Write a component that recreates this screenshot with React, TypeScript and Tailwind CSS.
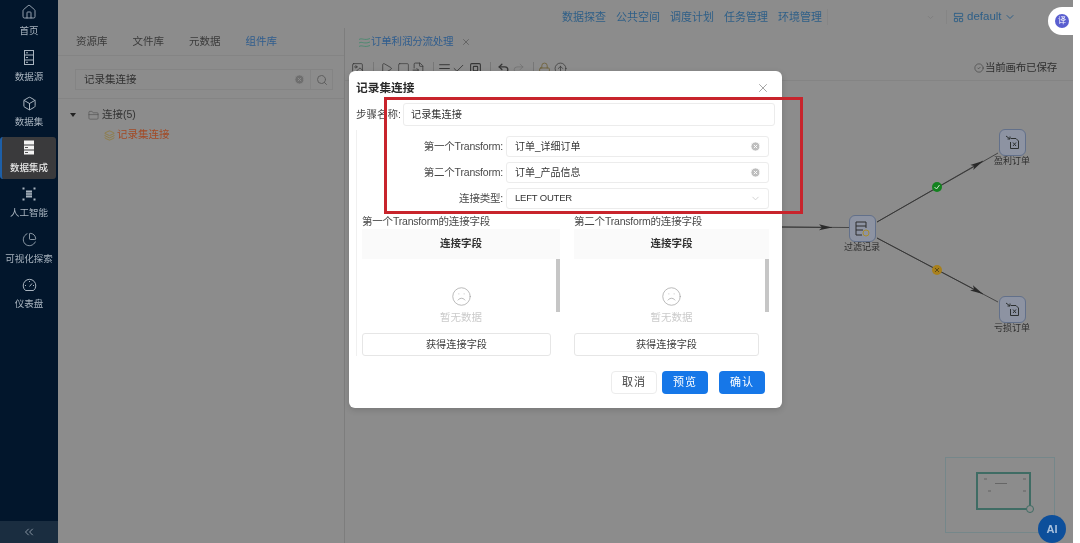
import { Box, ChevronDown, ChevronsLeft, CircleArrowUp, CircleCheck, FileInput, FolderClosed, Frown, Home, Image, LayoutPanelTop, Lock, PieChart, Play, Redo2, Search, Square, SquareSquare, Undo2, X, XCircle, Layers, Check, AlignJustify } from "lucide-react";
import type { ReactNode } from "react";

const FONT = "font-['Liberation_Sans','Noto_Sans_CJK_SC',sans-serif]";

function SourceIcon() {
  return (
    <svg width="12" height="15" viewBox="0 0 12 15" fill="none" stroke="currentColor" strokeWidth="1">
      <rect x="1.500" y="0.500" width="9" height="14" />
      <path d="M1.500 5h9M1.500 10h9M3 2.800h2M3 7.500h2M3 12.300h2" />
    </svg>
  );
}

function ActiveIcon() {
  return (
    <svg width="12" height="15" viewBox="0 0 12 15">
      <rect x="1" y="0.500" width="10" height="4" fill="#f2f2f2" />
      <rect x="1" y="5.500" width="10" height="4" fill="#f2f2f2" />
      <rect x="1" y="10.500" width="10" height="4" fill="#f2f2f2" />
      <path d="M2 7.500h3M2 12.500h3" stroke="#555" strokeWidth="1" />
    </svg>
  );
}

function AiIcon() {
  return (
    <svg width="14" height="14" viewBox="0 0 14 14" fill="currentColor">
      <rect x="4" y="3.500" width="6" height="7" />
      <path d="M4 5.800h6M4 8.200h6" stroke="#02162c" strokeWidth="0.6" />
      <rect x="0.500" y="0.500" width="2" height="2" />
      <rect x="11.500" y="0.500" width="2" height="2" />
      <rect x="0.500" y="11.500" width="2" height="2" />
      <rect x="11.500" y="11.500" width="2" height="2" />
    </svg>
  );
}

function DashIcon() {
  return (
    <svg width="15" height="15" viewBox="0 0 15 15" fill="none" stroke="currentColor" strokeWidth="1">
      <path d="M3.500 12.500A6.300 6.300 0 1 1 11.500 12.500Z" />
      <path d="M7.500 8.500L10 5.500M3 7.500h1M11 7.500h1M7.500 3v1" />
    </svg>
  );
}

const menu = [
  { label: "首页", icon: <Home size={16} strokeWidth={1.3} /> },
  { label: "数据源", icon: <SourceIcon /> },
  { label: "数据集", icon: <Box size={15} strokeWidth={1.6} /> },
  { label: "数据集成", icon: <ActiveIcon />, active: true },
  { label: "人工智能", icon: <AiIcon /> },
  { label: "可视化探索", icon: <PieChart size={15} strokeWidth={1.3} /> },
  { label: "仪表盘", icon: <DashIcon /> },
];

function Sidebar() {
  return (
    <aside className="flex w-[58px] shrink-0 flex-col justify-between bg-[#02162c]">
      <nav className="flex flex-col">
        {menu.map((m) => (
          <div key={m.label} className="flex h-[45.5px] flex-col items-center pt-[4px]">
            {m.active ? (
              <div className="-mt-[4px] flex h-[42px] w-[56px] flex-col items-center self-start rounded-[3px] border-l-2 border-[#1d5fa8] bg-[#3a3a3c] pt-[3px] text-[#e8e8e8]">
                <span className="flex h-4 items-center">{m.icon}</span>
                <span className="mt-[5px] text-[9.5px] leading-[14px] font-medium">{m.label}</span>
              </div>
            ) : (
              <>
                <span className="flex h-4 items-center text-[#a9b4bf]">{m.icon}</span>
                <span className="mt-[4px] text-[9.5px] leading-[14px] whitespace-nowrap text-[#a9b4bf]">{m.label}</span>
              </>
            )}
          </div>
        ))}
      </nav>
      <div className="flex h-[22px] items-center justify-center bg-[#1a2d40] text-[#a9b4bf]">
        <ChevronsLeft size={14} strokeWidth={1.3} />
      </div>
    </aside>
  );
}

function LeftPanel() {
  return (
    <section className="flex w-[287px] shrink-0 flex-col border-r border-[#7d7d7d]">
      <div className="flex h-[28px] items-center gap-[25px] border-b border-[#848484] pl-[18px] text-[10.5px] text-[#3a3a3a]">
        <span>资源库</span>
        <span>文件库</span>
        <span>元数据</span>
        <span className="text-[#2f5d8e]">组件库</span>
      </div>
      <div className="px-[17px] pt-[13px] pb-[8px]">
        <div className="flex h-[21px] w-[258px] items-center border border-[#848484] text-[10.5px] text-[#303030]">
          <span className="flex-1 pl-[8px]">记录集连接</span>
          <XCircle size={11} fill="#6e6e6e" stroke="#8c8c8c" className="mr-[5px]" />
          <span className="flex h-full w-[22px] items-center justify-center border-l border-[#848484] text-[#5e5e5e]">
            <Search size={12} />
          </span>
        </div>
      </div>
      <div className="border-t border-[#848484] pt-[6px] pl-[12px] text-[10.5px] text-[#333]">
        <div className="flex h-[20px] items-center">
          <span className="mr-[12px] h-0 w-0 border-x-[3px] border-t-[4px] border-x-transparent border-t-[#222]" />
          <FolderClosed size={11} strokeWidth={1.2} className="mr-[3px] text-[#4a4a4a]" />
          <span>连接(5)</span>
        </div>
        <div className="flex h-[20px] items-center pl-[34px] text-[#a34a25]">
          <Layers size={11} className="mr-[2px] text-[#8f7d45]" />
          <span>记录集连接</span>
        </div>
      </div>
    </section>
  );
}

function FlowNode({ pos, label, children }: { pos: string; label: string; children: ReactNode }) {
  return (
    <div className={`absolute flex w-[60px] flex-col items-center ${pos}`}>
      <div className="flex h-[27px] w-[27px] items-center justify-center rounded-[6px] border border-[#62708a] bg-[#8d93a2] text-[#2c2c2c]">
        {children}
      </div>
      <span className="text-[9px] leading-[11px] whitespace-nowrap text-[#2f2f2f]">{label}</span>
    </div>
  );
}

function ExcelGlyph() {
  return (
    <svg width="17" height="17" viewBox="0 0 17 17" fill="none" stroke="#2c3030" strokeWidth="1">
      <path d="M2 2l4 3M6 5V2.500M6 5H3.500" />
      <path d="M7 4.500h5l2.500 2.500v7.500H6.500V8" />
      <path d="M9 8.500l3 3.500M12 8.500l-3 3.500" />
    </svg>
  );
}

function Canvas() {
  return (
    <div className="relative flex-1 overflow-hidden">
      <svg className="absolute inset-0" width="728" height="464" fill="none">
        <defs>
          <marker id="arrow" markerUnits="userSpaceOnUse" markerWidth="14" markerHeight="8" refX="13" refY="4" orient="auto">
            <path d="M0 1L13 4L0 7L3 4Z" fill="#2a2a2a" />
          </marker>
        </defs>
        <path d="M436 146L504 146.500" stroke="#333" strokeWidth="0.8" />
        <path d="M436 146L487 146.500" stroke="#333" strokeWidth="0.8" markerEnd="url(#arrow)" />
        <path d="M532 141L653 72" stroke="#333" strokeWidth="0.8" />
        <path d="M532 141L638 80" stroke="#333" strokeWidth="0.8" markerEnd="url(#arrow)" />
        <path d="M532 157L653 221" stroke="#333" strokeWidth="0.8" />
        <path d="M532 157L638 213" stroke="#333" strokeWidth="0.8" markerEnd="url(#arrow)" />
        <circle cx="592" cy="106" r="5" fill="#13821f" />
        <path d="M589.500 106l2 2 3-4" stroke="#cfe5cf" strokeWidth="1" />
        <circle cx="592" cy="189" r="5" fill="#a8801c" />
        <path d="M590 187l4 4M594 187l-4 4" stroke="#5e4b17" strokeWidth="1" />
      </svg>
      <FlowNode pos="left-[487px] top-[134px]" label="过滤记录">
        <svg width="18" height="18" viewBox="0 0 18 18" fill="none" stroke="#2c2c2c" strokeWidth="1">
          <path d="M13 8V2H3v13h6M3 6h10M3 10h7" />
          <circle cx="13" cy="13" r="3" stroke="#a98c2c" />
        </svg>
      </FlowNode>
      <FlowNode pos="left-[637px] top-[48px]" label="盈利订单">
        <ExcelGlyph />
      </FlowNode>
      <FlowNode pos="left-[637px] top-[215px]" label="亏损订单">
        <ExcelGlyph />
      </FlowNode>

      {/* minimap */}
      <div className="absolute top-[376px] left-[600px] flex h-[76px] w-[110px] items-start justify-center border border-[#75878a] pt-[14px]">
        <div className="relative ml-[6px] h-[38px] w-[55px] border-2 border-[#3f6c64]">
          <span className="absolute top-[9px] left-[17px] h-[1px] w-[12px] bg-[#666]" />
          <span className="absolute top-[4px] left-[6px] h-[2px] w-[3px] bg-[#777]" />
          <span className="absolute top-[4px] right-[3px] h-[2px] w-[3px] bg-[#777]" />
          <span className="absolute top-[16px] left-[10px] h-[2px] w-[3px] bg-[#777]" />
          <span className="absolute top-[16px] right-[3px] h-[2px] w-[3px] bg-[#777]" />
          <span className="absolute -right-[5px] -bottom-[5px] h-[8px] w-[8px] rounded-full border border-[#3f6c64] bg-[#8c8c8c]" />
        </div>
      </div>
      <div className="absolute top-[434px] left-[693px] flex h-[28px] w-[28px] items-center justify-center rounded-full bg-[#0d4f9b] text-[11px] font-bold text-[#a9c1dd]">
        AI
      </div>
    </div>
  );
}

function TabGlyph() {
  return (
    <svg width="13" height="11" viewBox="0 0 13 11" fill="none" stroke="#4f8a72" strokeWidth="1">
      <path d="M1 2.500c3-2 5 1.500 11-1M1 6c3-2 5 1.500 11-1M1 9.500c3-2 5 1.500 11-1" />
    </svg>
  );
}

const Sep = ({ ml }: { ml: string }) => <span className={`h-[12px] w-px shrink-0 bg-[#777] ${ml}`} />;

function Workspace() {
  return (
    <section className="flex min-w-0 flex-1 flex-col">
      <div className="flex h-[28px] items-end">
        <div className="flex h-[28px] items-center pl-[13px] text-[10.5px] text-[#2f5d8e]">
          <TabGlyph />
          <span className="tracking-[-0.2px] whitespace-nowrap">订单利润分流处理</span>
          <X size={10} className="ml-[8px] text-[#5d5d5d]" />
        </div>
      </div>
      <div className="flex h-[25px] items-center border-b border-[#848484] pl-[6px] text-[#353535]">
        <Image size={13} strokeWidth={1.4} className="shrink-0" />
        <Sep ml="ml-[9px]" />
        <Play size={13} strokeWidth={1.4} className="ml-[6px] shrink-0" />
        <Square size={13} strokeWidth={1.2} className="ml-[4px] shrink-0" />
        <FileInput size={13} strokeWidth={1.4} className="ml-[2px] shrink-0" />
        <Sep ml="ml-[8px]" />
        <AlignJustify size={13} strokeWidth={1.8} className="ml-[4px] shrink-0" />
        <Check size={13} strokeWidth={1.6} className="ml-[1px] shrink-0" />
        <SquareSquare size={13} strokeWidth={2} className="ml-[4px] shrink-0" />
        <Sep ml="ml-[8px]" />
        <Undo2 size={13} strokeWidth={2.4} className="ml-[6px] shrink-0" />
        <Redo2 size={13} strokeWidth={1} className="ml-[2px] shrink-0 text-[#666]" />
        <Sep ml="ml-[8px]" />
        <Lock size={13} strokeWidth={1.4} className="ml-[4px] shrink-0 text-[#6d5c30]" />
        <CircleArrowUp size={13} strokeWidth={1.3} className="ml-[3px] shrink-0" />
        <div className="ml-auto flex items-center gap-[1px] pr-[16px] text-[10.5px] text-[#2f2f2f]">
          <CircleCheck size={10} strokeWidth={1.2} />
          <span className="tracking-[-0.2px]">当前画布已保存</span>
        </div>
      </div>
      <Canvas />
    </section>
  );
}

function Field({ label, value, kind }: { label: string; value: string; kind: "clear" | "select" }) {
  return (
    <div className="flex items-center">
      <label className="w-[149px] pr-[3px] text-right text-[10.5px] tracking-[-0.2px] text-[#4a4a4a]">{label}</label>
      <div className="flex h-[21px] flex-1 items-center rounded-[3px] border border-[#ececec] pr-[7px] pl-[8px] text-[10px] text-[#333]">
        <span className={kind === "select" ? "text-[9.5px] tracking-[-0.2px]" : ""}>{value}</span>
        <span className="flex-1" />
        {kind === "clear" ? (
          <XCircle size={11} fill="#bdbdbd" stroke="#ffffff" />
        ) : (
          <ChevronDown size={11} className="text-[#cfcfcf]" />
        )}
      </div>
    </div>
  );
}

function FieldTable({ title, width, button }: { title: string; width: string; button: string }) {
  return (
    <div className={`flex flex-col ${width}`}>
      <div className="h-[15px] text-[10.5px] leading-[15px] tracking-[-0.2px] whitespace-nowrap text-[#4a4a4a]">{title}</div>
      <div className="flex h-[30px] items-center justify-center bg-[#fafafa] text-[10.5px] font-bold text-[#333]">连接字段</div>
      <div className="relative flex h-[74px] flex-col items-center pt-[27px]">
        <Frown size={21} strokeWidth={0.9} className="text-[#a8a8a8]" />
        <span className="mt-[3px] text-[10.5px] text-[#cbcbcb]">暂无数据</span>
        <span className="absolute top-0 right-0 h-[53px] w-[4px] bg-[#c6c6c6]" />
      </div>
      <button className={`h-[23px] rounded-[3px] border border-[#e6e6e6] text-[10.2px] text-[#3d3d3d] ${button}`}>获得连接字段</button>
    </div>
  );
}

function Dialog() {
  return (
    <div className="absolute top-[71px] left-[349px] flex h-[337px] w-[433px] flex-col rounded-[6px] bg-white px-[7px] pt-[9px] shadow-[0_2px_6px_rgba(0,0,0,0.15)]">
      <div className="flex h-[16px] items-center justify-between pr-[5px]">
        <h2 className="text-[11.7px] font-bold text-[#2a2a2a]">记录集连接</h2>
        <X size={14} strokeWidth={1} className="text-[#666]" />
      </div>
      <div className="mt-[7px] flex items-center">
        <label className="w-[47px] text-[10.5px] whitespace-nowrap text-[#4a4a4a]">步骤名称:</label>
        <div className="flex h-[23px] flex-1 items-center rounded-[3px] border border-[#ececec] pl-[7px] text-[10.2px] text-[#333]">记录集连接</div>
      </div>
      <div className="mt-[4px] flex flex-col border-l border-[#f0f0f0] pt-[6px] pr-[6px]">
        <div className="flex flex-col gap-[5px]">
          <Field label="第一个Transform:" value="订单_详细订单" kind="clear" />
          <Field label="第二个Transform:" value="订单_产品信息" kind="clear" />
          <Field label="连接类型:" value="LEFT OUTER" kind="select" />
        </div>
        <div className="mt-[5px] flex gap-[14px] pl-[5px]">
          <FieldTable title="第一个Transform的连接字段" width="w-[198px]" button="w-[189px]" />
          <FieldTable title="第二个Transform的连接字段" width="w-[195px]" button="w-[185px]" />
        </div>
      </div>
      <div className="mt-[15px] flex justify-end gap-[5px] pr-[10px] text-[11px] tracking-[1px]">
        <button className="h-[23px] w-[46px] rounded-[4px] border border-[#ececec] text-[#3d3d3d]">取消</button>
        <button className="h-[23px] w-[46px] rounded-[4px] bg-[#1677e8] text-white">预览</button>
        <button className="ml-[6px] h-[23px] w-[46px] rounded-[4px] bg-[#1677e8] text-white">确认</button>
      </div>
    </div>
  );
}

export default function App() {
  return (
    <div className={`relative flex h-[543px] w-[1080px] overflow-hidden bg-white blur-[0.3px] ${FONT}`}>
      <Sidebar />
      <main className="flex w-[1015px] shrink-0 flex-col bg-[#8c8c8c]">
        <header className="flex h-[28px] shrink-0 items-center pt-[6px] pl-[504px] text-[11px] text-[#2e5f88]">
          <div className="flex gap-[10px] border-r border-[#858585] pr-[5px]">
            <span>数据探查</span>
            <span>公共空间</span>
            <span>调度计划</span>
            <span>任务管理</span>
            <span>环境管理</span>
          </div>
          <ChevronDown size={9} className="ml-[98px] text-[#7b7b7b]" />
          <span className="ml-[11px] h-[14px] w-px bg-[#858585]" />
          <LayoutPanelTop size={11} className="ml-[6px]" />
          <span className="ml-[3px] text-[11.5px]">default</span>
          <ChevronDown size={12} className="ml-[2px]" />
        </header>
        <div className="flex min-h-0 flex-1">
          <LeftPanel />
          <Workspace />
        </div>
      </main>

      {/* floating assistant */}
      <div className="absolute top-[7px] left-[1048px] flex h-[28px] w-[25px] items-center justify-end rounded-l-full bg-white pr-[4px]">
        <span className="flex h-[14px] w-[14px] items-center justify-center rounded-full bg-[#5a5fd0] text-[8px] text-white">译</span>
      </div>

      <Dialog />

      {/* red annotation */}
      <div className="absolute top-[97px] left-[384px] h-[117px] w-[419px] border-[3px] border-[#c8242c]" />
    </div>
  );
}
